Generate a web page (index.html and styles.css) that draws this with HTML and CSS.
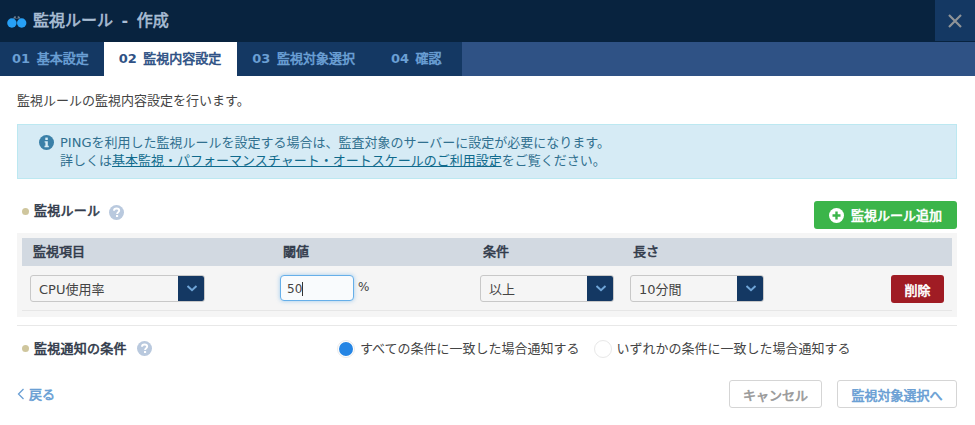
FILE: index.html
```html
<!DOCTYPE html>
<html lang="ja">
<head>
<meta charset="utf-8">
<title>監視ルール - 作成</title>
<link rel="stylesheet" href="styles.css">
</head>
<body>
<header class="title-bar">
  <svg class="logo" width="20" height="13" viewBox="0 0 20 13"><path d="M6 3.5 L7.5 1.2 H8.8 V3 H10.7 V1.2 H12 L13.5 3.5Z" fill="#6f7f90"/><circle cx="4.9" cy="8" r="4.7" fill="#27a0f6"/><circle cx="14.7" cy="8" r="4.7" fill="#27a0f6"/></svg>
  <h1 class="title faux">監視ルール<span class="latin"> - </span>作成</h1>
  <button class="close" aria-label="閉じる"><svg width="14" height="14" viewBox="0 0 14 14"><path d="M1 1 L13 13 M13 1 L1 13" stroke="#8f9397" stroke-width="2.2" fill="none"/></svg></button>
</header>
<nav class="tabs">
  <a class="tab tab-1 faux"><span class="latin">01 </span>基本設定</a>
  <a class="tab tab-2 faux active"><span class="latin">02 </span>監視内容設定</a>
  <a class="tab tab-3 faux"><span class="latin">03 </span>監視対象選択</a>
  <a class="tab tab-4 faux"><span class="latin">04 </span>確認</a>
</nav>
<main class="content">
  <p class="intro">監視ルールの監視内容設定を行います。</p>
  <div class="alert">
    <svg class="alert-icon" width="15" height="15" viewBox="0 0 15 15"><circle cx="7.5" cy="7.5" r="7.5" fill="#3a80a8"/><rect x="6.3" y="2.6" width="2.5" height="2.4" fill="#d6ebf5"/><path d="M5.6 6.2H8.8V10.8H9.8V12.2H5.5V10.8H6.4V7.6H5.6Z" fill="#d6ebf5"/></svg>
    <p class="alert-text">PINGを利用した監視ルールを設定する場合は、監査対象のサーバーに設定が必要になります。<br>詳しくは<a class="alert-link">基本監視・パフォーマンスチャート・オートスケールのご利用設定</a>をご覧ください。</p>
  </div>
  <div class="rule-head">
    <h2 class="section-title faux">監視ルール</h2>
    <svg class="help" width="15" height="15" viewBox="0 0 15 15"><circle cx="7.5" cy="7.5" r="7.5" fill="#b9c9de"/><path d="M5 5.8C5 4.4 6.1 3.5 7.6 3.5S10.2 4.4 10.2 5.6C10.2 7.2 8.1 7.3 8.1 8.9" fill="none" stroke="#fff" stroke-width="1.9"/><rect x="7" y="10" width="2.1" height="2" fill="#fff"/></svg>
    <button class="btn-add faux"><svg width="15" height="15" viewBox="0 0 15 15"><circle cx="7.5" cy="7.5" r="7.5" fill="#fff"/><path d="M7.5 3.5V11.5M3.5 7.5H11.5" stroke="#3bb54a" stroke-width="2.4"/></svg><span class="btn-add-label">監視ルール追加</span></button>
  </div>
  <section class="rules">
    <div class="rules-head faux">
      <span>監視項目</span><span>閾値</span><span>条件</span><span>長さ</span>
    </div>
    <div class="rules-row">
      <div class="select select-item"><span class="select-label">CPU使用率</span><span class="select-arrow"><svg width="12" height="7" viewBox="0 0 12 7"><path d="M1.5 1 L6 5.2 L10.5 1" fill="none" stroke="#6fa5d8" stroke-width="2"/></svg></span></div>
      <div class="threshold"><div class="input">50<i class="caret"></i></div><span class="unit">%</span></div>
      <div class="select select-cond"><span class="select-label">以上</span><span class="select-arrow"><svg width="12" height="7" viewBox="0 0 12 7"><path d="M1.5 1 L6 5.2 L10.5 1" fill="none" stroke="#6fa5d8" stroke-width="2"/></svg></span></div>
      <div class="last-cell">
        <div class="select select-cond"><span class="select-label">10分間</span><span class="select-arrow"><svg width="12" height="7" viewBox="0 0 12 7"><path d="M1.5 1 L6 5.2 L10.5 1" fill="none" stroke="#6fa5d8" stroke-width="2"/></svg></span></div>
        <button class="btn-delete faux">削除</button>
      </div>
    </div>
  </section>
  <div class="notify">
    <div class="notify-label">
      <h2 class="section-title faux">監視通知の条件</h2>
      <svg class="help" width="15" height="15" viewBox="0 0 15 15"><circle cx="7.5" cy="7.5" r="7.5" fill="#b9c9de"/><path d="M5 5.8C5 4.4 6.1 3.5 7.6 3.5S10.2 4.4 10.2 5.6C10.2 7.2 8.1 7.3 8.1 8.9" fill="none" stroke="#fff" stroke-width="1.9"/><rect x="7" y="10" width="2.1" height="2" fill="#fff"/></svg>
    </div>
    <label class="radio-item"><span class="radio checked"></span>すべての条件に一致した場合通知する</label>
    <label class="radio-item"><span class="radio"></span>いずれかの条件に一致した場合通知する</label>
  </div>
  <footer class="actions">
    <a class="back faux"><svg width="8" height="12" viewBox="0 0 8 12"><path d="M6.5 1 L1.5 6 L6.5 11" fill="none" stroke="#6a9fd4" stroke-width="1.3"/></svg><span class="back-label">戻る</span></a>
    <button class="btn-ghost btn-cancel faux">キャンセル</button>
    <button class="btn-ghost btn-next faux">監視対象選択へ</button>
  </footer>
</main>
</body>
</html>
```
FILE: styles.css
```css
* { box-sizing: border-box; }
html, body { margin: 0; padding: 0; }
body {
  width: 975px;
  height: 425px;
  overflow: hidden;
  background: #fff;
  color: #444;
  font: 13px/18px "DejaVu Sans", "Noto Sans CJK JP", sans-serif;
}
button { font-family: inherit; padding: 0; cursor: pointer; }
h1, h2, p { margin: 0; }

.faux { font-weight: 400; -webkit-text-stroke: .6px currentColor; }
.latin { font-weight: 700; -webkit-text-stroke: 0; margin-right: 2px; }

.title-bar {
  display: flex;
  align-items: center;
  height: 42px;
  padding-left: 7px;
  background: #08233f;
}
.logo { margin: 0 6px 0 0; }
.title { font-size: 16px; color: #a9bdd4; line-height: 42px; }
.title .latin { margin: 0 3px; }
.close {
  display: flex;
  align-items: center;
  justify-content: center;
  width: 40px;
  height: 41px;
  margin: 0 0 0 auto;
  align-self: flex-start;
  border: 0;
  background: #143863;
}

.tabs { display: flex; height: 34px; background: #2f5285; }
.tab {
  display: block;
  padding: 0 15px;
  line-height: 34px;
  color: #6a9fd4;
  background: #143863;
}
.tab-1 { padding-left: 12px; }
.tab-2 { padding-right: 16px; }
.tab-3 { padding-right: 17px; }
.tab-4 { padding: 0 20px 0 19px; }
.tab.active { color: #2f5285; background: #fff; }

.content { padding: 16px 18px 0 17px; }
.intro { line-height: 18px; }

.alert {
  display: flex;
  height: 55px;
  margin-top: 14px;
  padding: 9px 0 0 21px;
  background: #d6ebf5;
  border: 1px solid #bce8f1;
  color: #31708f;
}
.alert-icon { margin: 1px 6px 0 0; flex: none; }
.alert-link { color: #0f6a8c; text-decoration: underline; }

.rule-head { display: flex; align-items: flex-start; height: 54px; padding: 22px 0 0 5px; }
.rule-head .section-title { margin-top: 1px; }
.rule-head .help { margin: 4px 0 0 9px; }
.section-title {
  display: flex;
  align-items: center;
  font-size: 13px;
  line-height: 18px;
  letter-spacing: .25px;
  color: #333c4c;
}
.section-title::before {
  content: "";
  width: 7px;
  height: 7px;
  margin-right: 5px;
  border-radius: 50%;
  background: #cfc69d;
}
.help { margin: 1px 0 0 10px; flex: none; }
.btn-add {
  display: flex;
  align-items: center;
  justify-content: center;
  gap: 7px;
  width: 143px;
  height: 28px;
  margin: 0 0 0 auto;
  border: 0;
  border-radius: 3px;
  background: #3bb54a;
  color: #fff;
  font-size: 13px;
}
.btn-add-label { margin-top: -2px; }

.rules { height: 84px; padding: 5px 5px 6px; background: #f5f5f5; }
.rules-head, .rules-row { display: grid; grid-template-columns: 250px 200px 150px 1fr; }
.rules-head {
  height: 28px;
  padding-left: 11px;
  align-items: center;
  background: #d2d9e1;
  color: #333c4c;
}
.rules-row { height: 45px; padding: 9px 8px 0 8px; border-bottom: 1px solid #e6e6e6; align-items: start; }

.select {
  display: flex;
  height: 27px;
  border: 1px solid #c8c8c8;
  border-radius: 3px;
  background: #f5f5f5;
  overflow: hidden;
}
.select-item { width: 175px; }
.select-cond { width: 134px; }
.select-label { flex: 1; padding-left: 8px; line-height: 28px; color: #444; }
.select-arrow {
  display: flex;
  align-items: center;
  justify-content: center;
  width: 27px;
  margin: -1px -1px -1px 0;
  background: #143863;
}
.threshold { display: flex; align-items: flex-start; }
.input {
  display: flex;
  align-items: center;
  width: 74px;
  height: 26px;
  padding: 1px 0 0 6px;
  border: 1px solid #66afe9;
  border-radius: 4px;
  background: #f9fbfd;
  box-shadow: 0 0 4px rgba(102, 175, 233, .6);
  font-size: 12px;
}
.caret { width: 1px; height: 14px; background: #333; }
.unit { margin-left: 4px; font-size: 12px; line-height: 24px; }
.last-cell { display: flex; justify-content: space-between; }
.btn-delete {
  width: 53px;
  height: 28px;
  border: 0;
  border-radius: 3px;
  background: #a01c24;
  color: #fff;
  font-size: 13px;
}

.notify {
  display: flex;
  align-items: center;
  height: 46px;
  margin-top: 8px;
  padding-left: 5px;
  border-top: 1px solid #e8e8e8;
}
.notify-label { display: flex; width: 315px; }
.radio-item { display: flex; align-items: center; color: #444; }
.radio-item + .radio-item { margin-left: 14px; }
.radio {
  width: 18px;
  height: 18px;
  margin-right: 5px;
  border: 1px solid #e8e8e8;
  border-radius: 50%;
  background: #fff;
}
.radio.checked { border: 2px solid #fff; outline: 1px solid #eaeaea; outline-offset: -1px; background: #2585e4; }

.actions { display: flex; align-items: center; height: 28px; margin-top: 9px; }
.back { display: flex; align-items: center; gap: 4px; margin-right: auto; color: #6a9fd4; }
.back-label { margin-top: 2px; }
.btn-ghost {
  height: 28px;
  border: 1px solid #d5d5d5;
  border-radius: 3px;
  background: #fff;
  font-size: 13px;
}
.btn-cancel { width: 93px; color: #999; }
.btn-next { width: 120px; margin-left: 15px; color: #6a9fd4; }
```
